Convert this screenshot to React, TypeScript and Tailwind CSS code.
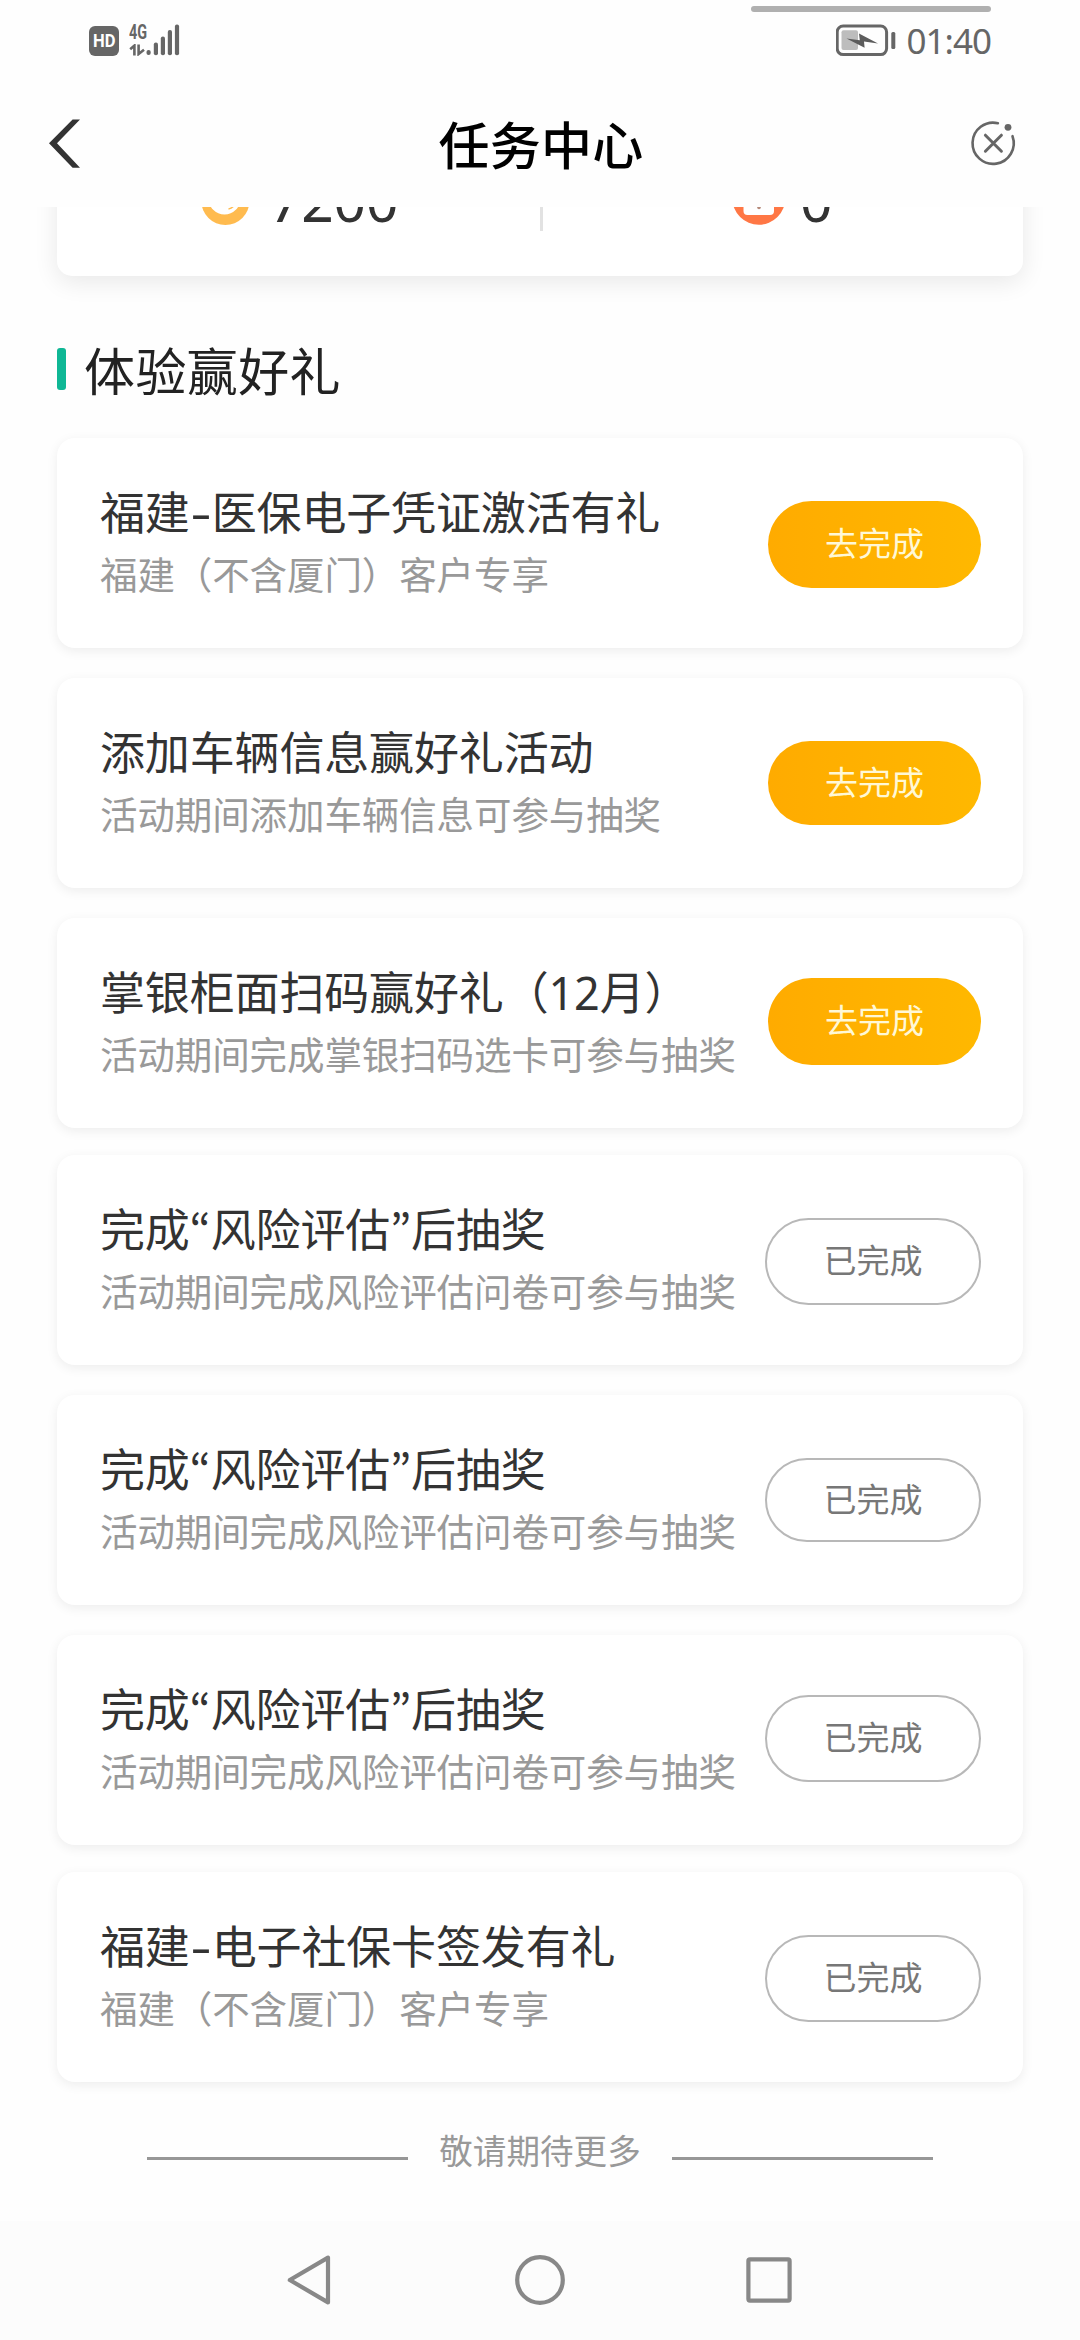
import { Fragment } from "react";

/* ─── Types ─── */
interface Task {
  title: string;
  desc: string;
  done: boolean;
  /** Gap above the card */
  gap: string;
  /** Vertical inset and height of the button */
  button: string;
}

/* ─── Data ─── */
const tasks: Task[] = [
  {
    title: "福建-医保电子凭证激活有礼",
    desc: "福建（不含厦门）客户专享",
    done: false,
    gap: "mt-0",
    button: "mt-[63px] h-[87px]",
  },
  {
    title: "添加车辆信息赢好礼活动",
    desc: "活动期间添加车辆信息可参与抽奖",
    done: false,
    gap: "mt-[30px]",
    button: "mt-[63px] h-[84px]",
  },
  {
    title: "掌银柜面扫码赢好礼（12月）",
    desc: "活动期间完成掌银扫码选卡可参与抽奖",
    done: false,
    gap: "mt-[30px]",
    button: "mt-[60px] h-[87px]",
  },
  {
    title: "完成“风险评估”后抽奖",
    desc: "活动期间完成风险评估问卷可参与抽奖",
    done: true,
    gap: "mt-[27px]",
    button: "mt-[63px] h-[87px]",
  },
  {
    title: "完成“风险评估”后抽奖",
    desc: "活动期间完成风险评估问卷可参与抽奖",
    done: true,
    gap: "mt-[30px]",
    button: "mt-[63px] h-[84px]",
  },
  {
    title: "完成“风险评估”后抽奖",
    desc: "活动期间完成风险评估问卷可参与抽奖",
    done: true,
    gap: "mt-[30px]",
    button: "mt-[60px] h-[87px]",
  },
  {
    title: "福建-电子社保卡签发有礼",
    desc: "福建（不含厦门）客户专享",
    done: true,
    gap: "mt-[27px]",
    button: "mt-[63px] h-[87px]",
  },
];

/* ─── Status bar ─── */
function StatusBar() {
  return (
    <div className="relative flex h-[80px] items-start justify-between pr-[89px] pl-[89px] text-[#666]">
      <div className="absolute top-[6px] left-[751px] h-[6px] w-[240px] rounded-full bg-[#b0b0b0]" />

      <div className="flex pt-[24px]">
        <div className="mt-[2px] flex h-[30px] w-[30px] items-center justify-center rounded-[6px] bg-[#666] font-['Roboto',sans-serif] text-[18px] leading-none font-bold text-white">
          <span className="scale-x-[0.92]">HD</span>
        </div>
        <div className="ml-[10px] w-[22px]">
          <div className="h-[16px] w-[26px] origin-left scale-x-[0.72] font-['Roboto',sans-serif] text-[20px] leading-[16px] font-bold">
            4G
          </div>
          <svg className="mt-[4px]" width="18" height="12" viewBox="0 0 18 12" fill="none" stroke="currentColor" strokeWidth="2.6">
            <path d="M1.2 5.2 L5.4 1.6 V11.5" />
            <path d="M9.6 0.5 V10 L15 5.8" />
          </svg>
        </div>
        <svg width="34" height="32" viewBox="0 0 34 32" fill="currentColor" className="-ml-[5px]">
          <rect x="0.5" y="26" width="4.2" height="5" rx="2" />
          <rect x="7.8" y="18.5" width="4.2" height="12.7" rx="2" />
          <rect x="14.8" y="12.5" width="4.2" height="18.7" rx="2" />
          <rect x="21.8" y="6" width="4.2" height="25.2" rx="2" />
          <rect x="28.9" y="0.6" width="4.2" height="30.6" rx="2" />
        </svg>
      </div>

      <div className="flex">
        <svg className="mt-[24px]" width="62" height="33" viewBox="0 0 62 33">
          <rect x="1.2" y="2" width="49.4" height="28.6" rx="6" fill="none" stroke="#666" strokeWidth="3" />
          <rect x="5.5" y="6.3" width="16.5" height="19.7" rx="2" fill="#bdbdbd" />
          <path d="M10.5 14.5 L23.8 16.2 L23 9.5 L42 19.4 L28 17.6 L28.6 23.8 Z" fill="#5c5c5c" />
          <rect x="55.3" y="8" width="4" height="17" rx="1.5" fill="#666" />
        </svg>
        <div className="mt-[20px] ml-[9px] font-['Noto_Sans',sans-serif] text-[35px] leading-[42px] tracking-[-1px] whitespace-nowrap">
          01:40
        </div>
      </div>
    </div>
  );
}

/* ─── Title bar ─── */
function TitleBar() {
  return (
    <header className="flex h-[127px] items-start justify-between pr-[61px] pl-[47px]">
      <svg className="mt-[38px]" width="36" height="51" viewBox="0 0 36 51" fill="#333">
        <path d="M2 25.3 L25.6 1.5 H33 L10 25.3 L33 49.7 H25.6 Z" />
      </svg>
      <h1 className="mt-[33px] ml-[36px] text-[51px] leading-[64px] font-medium tracking-[0.3px] text-black">任务中心</h1>
      <svg className="mt-[39px]" width="56" height="48" viewBox="0 0 56 48" fill="none" stroke="#666" strokeWidth="2.6" strokeLinecap="round">
        <path d="M34.9 4.2 A20.6 20.6 0 1 0 49.5 17.2" />
        <path d="M22.4 16.2 L38.4 32.2 M38.4 16.2 L22.4 32.2" strokeWidth="3" />
        <circle cx="45" cy="8.3" r="3.4" fill="#666" stroke="none" />
      </svg>
    </header>
  );
}

/* ─── Points card, scrolled half under the title bar ─── */
function PointsCard() {
  return (
    <div className="h-[105px] overflow-hidden px-[57px]">
      <div className="-mt-[51px] flex h-[120px] rounded-b-[15px] bg-white shadow-[0_6px_24px_rgba(0,0,0,0.09)]">
        <div className="flex w-[483px] pl-[144px] pt-[21px]">
          <svg width="50" height="50" viewBox="0 0 50 50">
            <circle cx="24.4" cy="24" r="24" fill="#ffbb4f" />
            <circle cx="23.5" cy="21.5" r="16" fill="#fff" />
            <path d="M27.5 32 Q31 31.5 33.5 28" stroke="#ffbb4f" strokeWidth="1.5" fill="none" />
          </svg>
          <span className="mt-[-12px] ml-[18px] h-[70px] font-['Noto_Sans',sans-serif] text-[57px] leading-[70px] tracking-[-0.3px] text-[#333]">
            7200
          </span>
        </div>
        <div className="h-[75px] w-[3px] bg-[#e2e2e2]" />
        <div className="flex pl-[189px] pt-[16px]">
          <svg width="54" height="54" viewBox="0 0 54 54">
            <circle cx="26.8" cy="26.4" r="26.4" fill="#ff7745" />
            <rect x="11.5" y="14" width="30.5" height="29" rx="4" fill="#fff" />
            <circle cx="27" cy="35.5" r="1.8" fill="#b58a7a" />
          </svg>
          <span className="mt-[-7px] ml-[14px] h-[70px] font-['Noto_Sans',sans-serif] text-[57px] leading-[70px] text-[#333]">0</span>
        </div>
      </div>
    </div>
  );
}

/* ─── Task title: dash and curly quotes get their own widths ─── */
function TaskTitle({ text }: { text: string }) {
  return (
    <h3 className="mt-[47px] h-[56px] text-[45px] leading-[56px] tracking-[-0.15px] text-[#333]">
      {text.split(/([-“”])/).map((part, i) => {
        if (part === "-") {
          return (
            <span key={i} className="inline-block w-[22px] -translate-y-px scale-x-[1.45] text-center leading-none">
              -
            </span>
          );
        }
        if (part === "“" || part === "”") {
          return (
            <span key={i} className="inline-flex w-[21px] justify-center font-['Noto_Sans_CJK_KR',sans-serif] leading-none">
              {part}
            </span>
          );
        }
        return <Fragment key={i}>{part}</Fragment>;
      })}
    </h3>
  );
}

/* ─── Single task card ─── */
function TaskCard({ task }: { task: Task }) {
  return (
    <div className={`${task.gap} flex h-[210px] items-start justify-between rounded-[18px] bg-white pr-[42px] pl-[43px] shadow-[0_3px_12px_rgba(0,0,0,0.07)]`}>
      <div className="whitespace-nowrap">
        <TaskTitle text={task.title} />
        <p className="mt-[11px] h-[46px] text-[37.5px] leading-[46px] tracking-[-0.1px] text-[#999]">{task.desc}</p>
      </div>
      {task.done ? (
        <button className={`${task.button} w-[216px] shrink-0 rounded-full border-2 border-[#b8b8b8] pb-[2px] text-[33px] leading-none text-[#777]`}>
          已完成
        </button>
      ) : (
        <button className={`${task.button} w-[213px] shrink-0 rounded-full bg-linear-to-r from-[#ffab00] to-[#ffb800] pb-[2px] text-[33px] leading-none text-[#fff8d6]`}>
          去完成
        </button>
      )}
    </div>
  );
}

/* ─── System navigation ─── */
function NavBar() {
  return (
    <nav className="flex h-[119px] items-start justify-center bg-[#fcfcfc] pt-[32px]">
      <svg width="506" height="54" viewBox="0 0 506 54" fill="none" stroke="#888" strokeWidth="4.2" strokeLinejoin="round">
        <path d="M41 4.6 V49.4 L2.8 27 Z" />
        <circle cx="253" cy="27" r="22.8" />
        <rect x="461.4" y="6.4" width="41.2" height="41.2" rx="1.5" />
      </svg>
    </nav>
  );
}

/* ─── Page ─── */
export default function App() {
  return (
    <div className="flex h-[2340px] w-[1080px] flex-col overflow-hidden bg-[#fefefe] font-['Noto_Sans','Noto_Sans_CJK_SC',sans-serif]">
      <StatusBar />
      <TitleBar />
      <PointsCard />

      <main className="flex-1 px-[57px]">
        <div className="mt-[27px] flex h-[64px] items-center">
          <span className="mb-[4px] h-[42px] w-[9px] rounded-[3px] bg-[#0fb795]" />
          <h2 className="ml-[18px] text-[51px] leading-[64px] tracking-[0.4px] text-[#222]">体验赢好礼</h2>
        </div>

        <div className="mt-[35px]">
          {tasks.map((task, i) => (
            <TaskCard key={i} task={task} />
          ))}
        </div>

        <div className="mt-[48px] flex h-[42px] items-center justify-center">
          <span className="mt-[15px] h-[3px] w-[261px] bg-[#979797]" />
          <span className="w-[264px] text-center text-[33.6px] leading-[42px] text-[#999]">敬请期待更多</span>
          <span className="mt-[15px] h-[3px] w-[261px] bg-[#979797]" />
        </div>
      </main>

      <NavBar />
    </div>
  );
}
